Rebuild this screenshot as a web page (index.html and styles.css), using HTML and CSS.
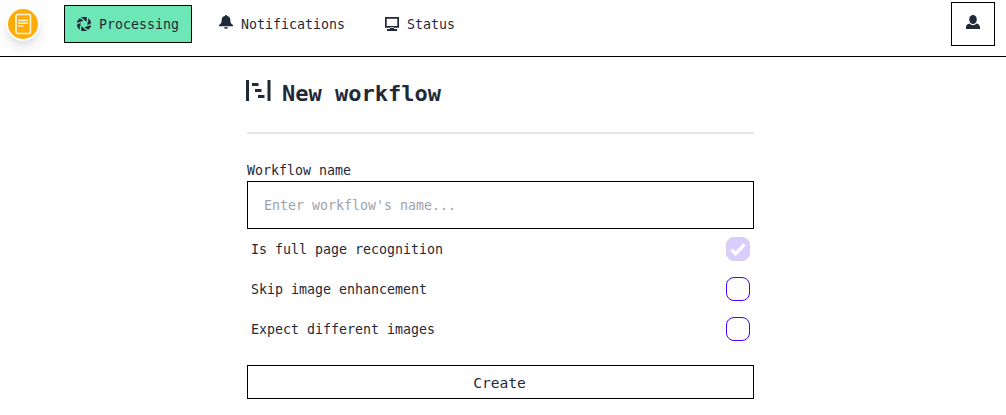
FILE: index.html
```html
<!DOCTYPE html>
<html lang="en">
<head>
<meta charset="utf-8">
<title>New workflow</title>
<link rel="stylesheet" href="styles.css">
</head>
<body>
<header class="navbar">
  <a class="logo" href="#" aria-label="Home">
    <svg width="30" height="30" viewBox="0 0 30 30" fill="none" stroke="#fff5d6"><circle cx="15" cy="15" r="15" fill="#ffab08" stroke="none"/><rect x="8" y="5.500" width="14.500" height="19" rx="1.500" stroke-width="1.700"/><path d="M10 11.500h10M10 14.300h10M10 17.100h5.500" stroke-width="1.500"/></svg>
  </a>
  <nav class="tabs">
    <a class="tab tab-active" href="#">
      <svg class="tab-icon" viewBox="0 0 14 14"><path fill="currentColor" fill-rule="evenodd" d="M7-.2a7.200 7.200 0 1 1 0 14.400A7.200 7.200 0 0 1 7-.2zM7 3 3.500 5v4L7 11l3.500-2V5z"/><path stroke="#6ee7b7" stroke-width="1.400" d="M7 3 2.700.5M10.500 5V0M10.500 9l4.400-2.500M7 11l4.300 2.500M3.500 9v5M3.500 5-.9 7.500"/></svg>
      <span>Processing</span>
    </a>
    <a class="tab" href="#">
      <svg class="tab-icon tab-icon-bell" viewBox="0 0 14 14" fill="currentColor"><path d="M7 0c.7 0 1.100.4 1.200 1 2 .5 3.100 1.900 3.100 3.800 0 2.500.4 3.800 2.700 5.200v1.200H0V10c2.300-1.400 2.700-2.700 2.700-5.200C2.700 2.900 3.800 1.500 5.800 1 5.900.4 6.300 0 7 0zM5 12.200h4c-.2 1-.9 1.500-2 1.500s-1.800-.5-2-1.500z"/></svg>
      <span>Notifications</span>
    </a>
    <a class="tab" href="#">
      <svg class="tab-icon" viewBox="0 0 14 14" fill="currentColor"><path fill-rule="evenodd" d="M0 0h14v10.700H0zM1.700 1.700v7.200h10.600V1.700zM5 10h4v2h3v2H2v-2h3z"/></svg>
      <span>Status</span>
    </a>
  </nav>
  <button class="account" aria-label="Account">
    <svg width="14" height="14" viewBox="0 0 14 14" fill="currentColor"><ellipse cx="7" cy="4.500" rx="3.800" ry="4.500"/><path d="M3.600 8.500C4.500 9.700 5.700 10.200 7 10.200s2.500-.5 3.400-1.700c2.200.6 3.600 1.800 3.600 3.700V14H0v-1.800c0-1.900 1.400-3.100 3.600-3.700z"/></svg>
  </button>
</header>
<main class="content">
  <h1 class="title">
    <svg width="25" height="22" viewBox="0 0 25 22" fill="currentColor"><path d="M0 0h3v21H0zM21.500 0h3v21h-3zM6 3h6.500v3H6zM9 9h6.500v3H9zM12 15h6.500v3H12z"/></svg>
    <span>New workflow</span>
  </h1>
  <hr class="divider">
  <form>
    <label class="field-label" for="name">Workflow name</label>
    <input class="field" id="name" type="text" placeholder="Enter workflow's name...">
    <label class="option">
      <span class="option-text">Is full page recognition</span>
      <span class="checkbox checkbox-disabled"><svg width="24" height="24" viewBox="0 0 24 24" fill="none" stroke="#fff" stroke-width="3.300"><path d="M5.300 12.600 9.700 16.700 18.500 7.600"/></svg></span>
    </label>
    <label class="option"><span class="option-text">Skip image enhancement</span><span class="checkbox"></span></label>
    <label class="option"><span class="option-text">Expect different images</span><span class="checkbox"></span></label>
    <button class="submit" type="button">Create</button>
  </form>
</main>
</body>
</html>
```
FILE: styles.css
```css
* { box-sizing: border-box; }
body {
  margin: 0;
  background: #fff;
  color: #1f2937;
  font: 13.29px/20px "DejaVu Sans Mono", monospace;
}
svg { display: block; flex: none; }
button, input { font: inherit; color: inherit; }
.navbar {
  display: flex;
  align-items: flex-start;
  height: 57px;
  padding: 2px 11px 0 6px;
  border-bottom: 1px solid #000;
}
.logo {
  margin-top: 5px;
  padding: 2px;
  border-radius: 50%;
  background: #fff;
  box-shadow: 0 8px 14px rgba(0, 0, 0, .08), 0 3px 5px rgba(0, 0, 0, .06);
}
.tabs { display: flex; gap: 14px; margin: 3px 0 0 24px; }
.tab {
  display: flex;
  align-items: center;
  gap: 8px;
  height: 38px;
  padding: 0 12px;
  border: 1px solid transparent;
  color: inherit;
  text-decoration: none;
}
.tab span { padding-top: 2px; }
.tab-active { border-color: #000; background: #6ee7b7; }
.tab-icon { width: 14px; height: 14px; }
.tab-icon-bell { margin-bottom: 4px; }
.account {
  display: flex;
  justify-content: center;
  width: 44px;
  height: 44px;
  margin-left: auto;
  padding: 12px 0 0;
  border: 1px solid #000;
  background: #fff;
}
.content { width: 507px; margin: 23px 0 0 247px; }
.title {
  display: flex;
  gap: 11px;
  height: 52px;
  margin: 0 0 0 -1px;
  font-size: 22px;
  line-height: 28px;
}
.divider { height: 2px; margin: 0 0 27px; border: 0; background: #e5e6e6; }
.field-label { display: block; height: 20px; }
.field {
  display: block;
  width: 100%;
  height: 48px;
  padding: 0 16px;
  border: 1px solid #000;
  border-radius: 0;
  background: #fff;
}
.field::placeholder { color: #9ca3af; opacity: 1; }
.option {
  display: flex;
  align-items: center;
  justify-content: space-between;
  height: 40px;
  padding: 0 4px;
}
.option-text { padding-top: 2px; }
.checkbox { width: 24px; height: 24px; border: 1px solid #4a00ff; border-radius: 8px; }
.checkbox-disabled { border-color: #d5cfe1; background: #dbccff; }
.checkbox-disabled svg { margin: -1px; }
.submit {
  width: 100%;
  height: 34px;
  margin-top: 16px;
  padding: 2px 2px 0 0;
  border: 1px solid #000;
  background: #fff;
  font-size: 14.6px;
}
```
